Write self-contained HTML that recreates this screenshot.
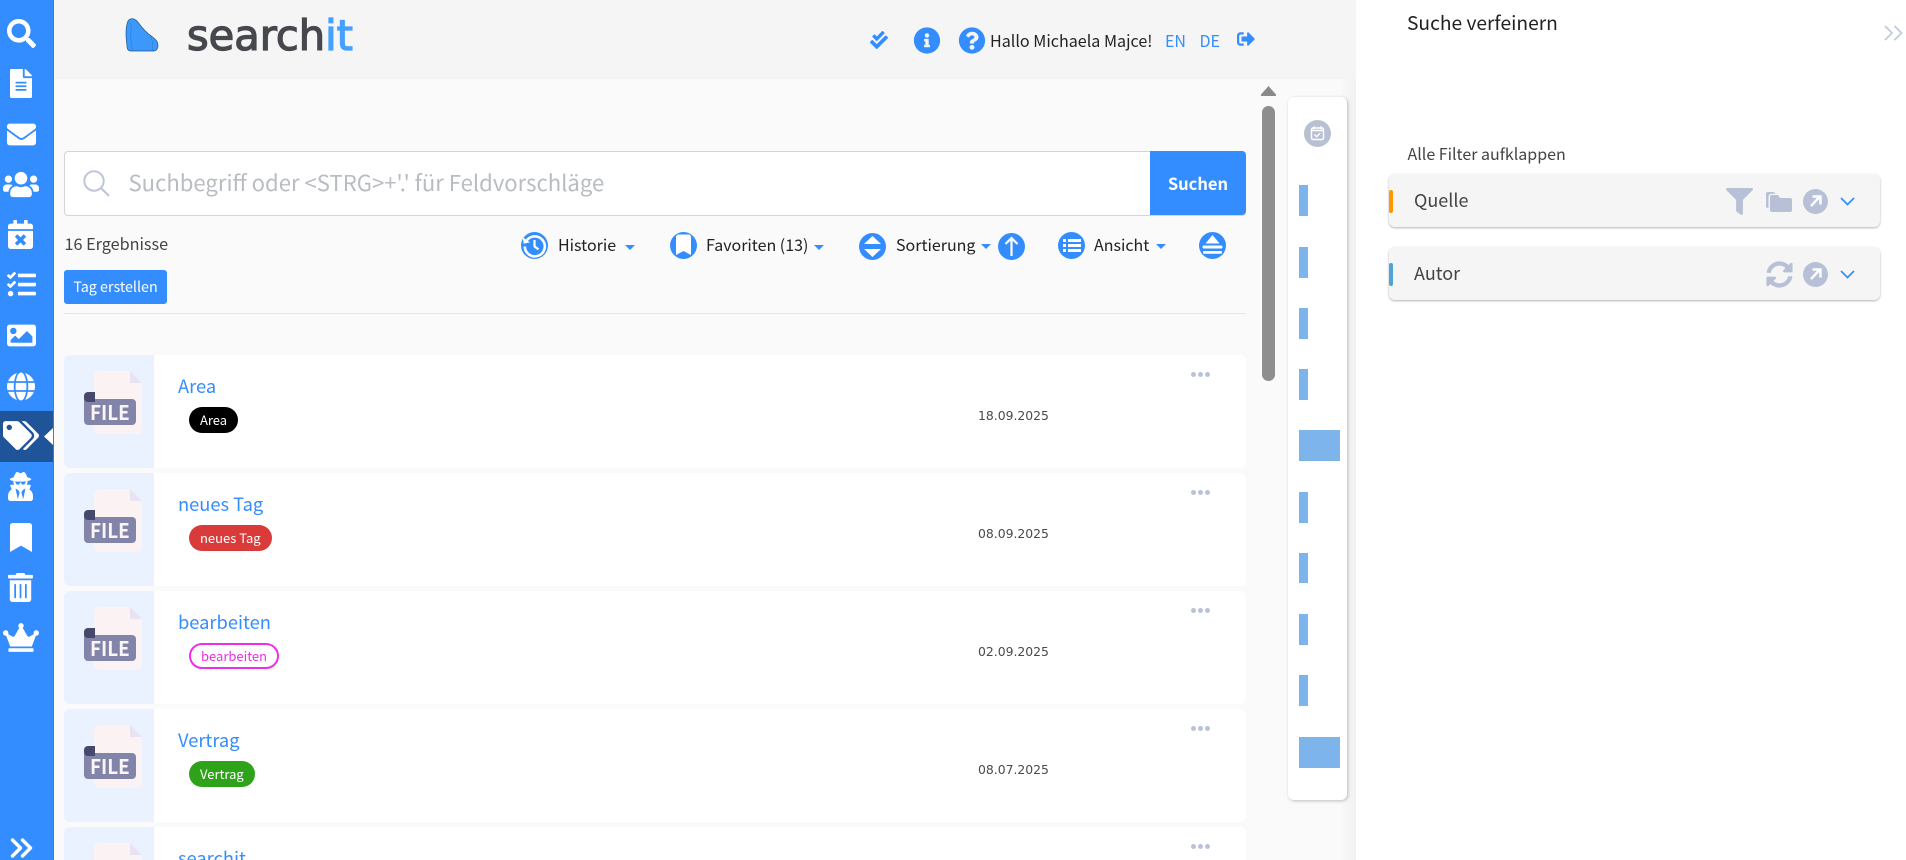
<!DOCTYPE html>
<html lang="de">
<head>
<meta charset="utf-8">
<title>searchit</title>
<style>
*{box-sizing:border-box}
html,body{margin:0;padding:0;width:1906px;height:860px;overflow:hidden;background:#fff;font-family:"Noto Sans CJK JP","Liberation Sans",sans-serif}
#root{position:relative;width:1906px;height:860px;overflow:hidden;background:#fff}
.a{position:absolute}
.t{position:absolute;white-space:nowrap;line-height:1}
svg{position:absolute;display:block;overflow:visible}
.w{fill:#fff}.b{fill:#348dff}.g{fill:#b7c0d6}
#side{left:0;top:0;width:54px;height:860px;background:#348dff;border-right:1px solid #2f7fe6}
#head{left:54px;top:0;width:1302px;height:79px;background:#f5f5f5}
#main{left:54px;top:79px;width:1302px;height:781px;background:#fafafa}
#mainr{left:1340px;top:79px;width:16px;height:781px;background:linear-gradient(90deg,#fafafa,#f1f1f1)}
.card{position:absolute;left:64px;width:1182px;height:113px;background:#fff;border-radius:6px;overflow:hidden}
.thumb{position:absolute;left:0;top:0;width:90px;height:100%;background:#ebf2ff}
.title{position:absolute;left:114px;top:19px;font-size:18.3px;line-height:24px;color:#348dff;white-space:nowrap}
.badge{position:absolute;left:125px;top:52px;height:26px;border-radius:13px;font-size:13px;line-height:25px;padding:0 11px;color:#fff;white-space:nowrap}
.date{position:absolute;left:914px;top:53px;font:12.4px/16px "DejaVu Sans",sans-serif;color:#4a4a4a;white-space:nowrap}
.dots{position:absolute;left:1127px;top:16.5px;width:20px;height:5px}
.dots i{position:absolute;top:0;width:5px;height:5px;border-radius:50%;background:#bac2da}
.fi{position:absolute;left:20px;top:16px;width:58px;height:63px}
.fi .pg{position:absolute;left:10px;top:0;width:48px;height:63px;background:#fbf2f3;border-radius:5px;clip-path:polygon(0 0,36px 0,100% 12px,100% 100%,0 100%)}
.fi .fd{position:absolute;left:46px;top:0;width:12px;height:12px;background:#e8e2f3;clip-path:polygon(0 0,100% 100%,0 100%)}
.fi .roll{position:absolute;left:0;top:21px;width:11px;height:10px;background:#46496b;border-radius:4px 0 0 4px;z-index:1}
.fi .ban{position:absolute;left:0;top:28px;width:52px;height:26px;background:#8285a9;border-radius:0 4px 4px 4px;color:#fcf5f5;font-size:20.5px;font-weight:700;line-height:25px;padding-left:6px}
.fi .ban span{display:inline-block;transform:scaleX(.92);transform-origin:0 50%}
.bar{position:absolute;left:1299px;width:9px;background:#7eb4ec}
.bar.l{width:41px}
.panel{position:absolute;left:1389px;width:491px;height:53px;background:#f5f5f5;border-radius:6px;box-shadow:0 1px 2px rgba(0,0,0,.3)}
.tick{position:absolute;left:0;top:16px;width:4px;height:23px;border-radius:2px}
.ptxt{position:absolute;left:25px;top:12px;font-size:18px;line-height:28px;color:#444}
.caret{position:absolute;width:0;height:0;border-left:5px solid transparent;border-right:5px solid transparent;border-top:5.5px solid #348dff}
.tb{font-size:16px;color:#222}
</style>
</head>
<body>
<div id="root">
<div class="a" id="head"></div>
<div class="a" id="main"></div>
<div class="a" id="mainr"></div>

<!-- Sidebar -->
<div class="a" id="side"></div>
<div class="a" style="left:0;top:411px;width:53px;height:51px;background:#1f5499"></div>

<svg style="left:7px;top:19px" width="29" height="29" viewBox="0 0 512 512"><path class="w" d="M505 442.7L405.3 343c-4.5-4.5-10.6-7-17-7H372c27.6-35.3 44-79.7 44-128C416 93.1 322.9 0 208 0S0 93.1 0 208s93.1 208 208 208c48.3 0 92.7-16.4 128-44v16.3c0 6.4 2.5 12.5 7 17l99.7 99.7c9.4 9.4 24.6 9.4 33.9 0l28.3-28.3c9.4-9.4 9.4-24.6.1-34zM208 336c-70.7 0-128-57.2-128-128 0-70.7 57.2-128 128-128 70.7 0 128 57.2 128 128 0 70.7-57.2 128-128 128z"/></svg>
<svg style="left:10px;top:69px" width="22" height="29" viewBox="0 0 384 512" preserveAspectRatio="none"><path class="w" d="M224 136V0H24C10.7 0 0 10.7 0 24v464c0 13.3 10.7 24 24 24h336c13.3 0 24-10.7 24-24V160H248c-13.2 0-24-10.8-24-24zm64 236c0 6.6-5.4 12-12 12H108c-6.6 0-12-5.4-12-12v-8c0-6.6 5.4-12 12-12h168c6.6 0 12 5.4 12 12v8zm0-64c0 6.6-5.4 12-12 12H108c-6.6 0-12-5.4-12-12v-8c0-6.6 5.4-12 12-12h168c6.6 0 12 5.4 12 12v8zm0-72v8c0 6.6-5.4 12-12 12H108c-6.6 0-12-5.4-12-12v-8c0-6.6 5.4-12 12-12h168c6.6 0 12 5.4 12 12zm96-114.1v6.1H256V0h6.1c6.4 0 12.5 2.5 17 7l97.9 98c4.5 4.5 7 10.6 7 16.9z"/></svg>
<svg style="left:7px;top:120px" width="29" height="29" viewBox="0 0 512 512"><path class="w" d="M502.3 190.8c3.9-3.1 9.7-.2 9.7 4.7V400c0 26.5-21.5 48-48 48H48c-26.5 0-48-21.5-48-48V195.6c0-5 5.7-7.8 9.7-4.7 22.4 17.4 52.1 39.5 154.1 113.6 21.1 15.4 56.7 47.8 92.2 47.6 35.7.3 72-32.8 92.3-47.6 102-74.1 131.6-96.3 154-113.7zM256 320c23.2.4 56.6-29.2 73.4-41.4 132.7-96.3 142.8-104.7 173.4-128.7 5.8-4.5 9.2-11.5 9.2-18.9v-19c0-26.5-21.5-48-48-48H48C21.5 64 0 85.5 0 112v19c0 7.4 3.4 14.3 9.2 18.9 30.6 23.9 40.7 32.4 173.4 128.7 16.8 12.2 50.2 41.8 73.4 41.4z"/></svg>
<svg style="left:3px;top:170px" width="36" height="29" viewBox="0 0 640 512"><path class="w" d="M96 224c35.3 0 64-28.7 64-64s-28.7-64-64-64-64 28.7-64 64 28.7 64 64 64zm448 0c35.3 0 64-28.7 64-64s-28.7-64-64-64-64 28.7-64 64 28.7 64 64 64zm32 32h-64c-17.6 0-33.5 7.1-45.1 18.6 40.3 22.1 68.9 62 75.1 109.4h66c17.7 0 32-14.3 32-32v-32c0-35.3-28.7-64-64-64zm-256 0c61.9 0 112-50.1 112-112S381.9 32 320 32 208 82.1 208 144s50.1 112 112 112zm76.8 32h-8.3c-20.8 10-43.9 16-68.5 16s-47.6-6-68.5-16h-8.3C179.6 288 128 339.6 128 403.2V432c0 26.5 21.5 48 48 48h288c26.5 0 48-21.5 48-48v-28.8c0-63.6-51.6-115.2-115.2-115.2zm-223.7-13.4C161.5 263.1 145.6 256 128 256H64c-35.3 0-64 28.7-64 64v32c0 17.7 14.3 32 32 32h65.9c6.3-47.4 34.9-87.3 75.2-109.4z"/></svg>
<svg style="left:8px;top:220px" width="25" height="29" viewBox="0 0 448 512" preserveAspectRatio="none"><path class="w" d="M436 160H12c-6.6 0-12-5.4-12-12v-36c0-26.5 21.5-48 48-48h48V12c0-6.6 5.4-12 12-12h40c6.6 0 12 5.4 12 12v52h128V12c0-6.6 5.4-12 12-12h40c6.6 0 12 5.4 12 12v52h48c26.5 0 48 21.5 48 48v36c0 6.6-5.4 12-12 12zM12 192h424c6.6 0 12 5.4 12 12v260c0 26.5-21.5 48-48 48H48c-26.5 0-48-21.5-48-48V204c0-6.6 5.4-12 12-12zm257.3 160l48.1-48.1c4.7-4.7 4.7-12.3 0-17l-28.3-28.3c-4.7-4.7-12.3-4.7-17 0L224 306.7l-48.1-48.1c-4.7-4.7-12.3-4.7-17 0l-28.3 28.3c-4.7 4.7-4.7 12.3 0 17l48.1 48.1-48.1 48.1c-4.7 4.7-4.7 12.3 0 17l28.3 28.3c4.7 4.7 12.3 4.7 17 0l48.1-48.1 48.1 48.1c4.7 4.7 12.3 4.7 17 0l28.3-28.3c4.7-4.7 4.7-12.3 0-17L269.3 352z"/></svg>
<svg style="left:7px;top:270px" width="29" height="29" viewBox="0 0 512 512"><path class="w" d="M139.61 35.5a12 12 0 0 0-17 0L58.93 98.81l-22.7-22.12a12 12 0 0 0-17 0L3.53 92.41a12 12 0 0 0 0 17l47.59 47.4a12.78 12.78 0 0 0 17.61 0l15.59-15.62L156.52 69a12.09 12.09 0 0 0 .09-17zm0 159.19a12 12 0 0 0-17 0l-63.68 63.72-22.7-22.1a12 12 0 0 0-17 0L3.53 252a12 12 0 0 0 0 17L51 316.5a12.77 12.77 0 0 0 17.6 0l15.7-15.69 72.2-72.22a12 12 0 0 0 .09-16.9zM64 368c-26.49 0-48.59 21.5-48.59 48S37.53 464 64 464a48 48 0 0 0 0-96zm432 16H208a16 16 0 0 0-16 16v32a16 16 0 0 0 16 16h288a16 16 0 0 0 16-16v-32a16 16 0 0 0-16-16zm0-320H208a16 16 0 0 0-16 16v32a16 16 0 0 0 16 16h288a16 16 0 0 0 16-16V80a16 16 0 0 0-16-16zm0 160H208a16 16 0 0 0-16 16v32a16 16 0 0 0 16 16h288a16 16 0 0 0 16-16v-32a16 16 0 0 0-16-16z"/></svg>
<svg style="left:7px;top:321px" width="29" height="29" viewBox="0 0 512 512"><path class="w" d="M464 448H48c-26.51 0-48-21.49-48-48V112c0-26.51 21.49-48 48-48h416c26.51 0 48 21.49 48 48v288c0 26.51-21.49 48-48 48zM112 120c-30.928 0-56 25.072-56 56s25.072 56 56 56 56-25.072 56-56-25.072-56-56-56zM64 384h384V272l-87.515-87.515c-4.686-4.686-12.284-4.686-16.971 0L208 320l-55.515-55.515c-4.686-4.686-12.284-4.686-16.971 0L64 336v48z"/></svg>
<svg style="left:7px;top:372px" width="28" height="29" viewBox="0 0 496 512"><path class="w" d="M336.5 160C322 70.7 287.8 8 248 8s-74 62.7-88.5 152h177zM152 256c0 22.2 1.2 43.5 3.3 64h185.3c2.1-20.5 3.3-41.8 3.3-64s-1.2-43.5-3.3-64H155.3c-2.1 20.5-3.3 41.8-3.3 64zm324.7-96c-28.6-67.9-86.5-120.4-158-141.6 24.4 33.8 41.2 84.7 50 141.6h108zM177.2 18.4C105.8 39.6 47.8 92.1 19.3 160h108c8.7-56.9 25.5-107.8 49.9-141.6zM487.4 192H372.7c2.1 21 3.3 42.5 3.3 64s-1.2 43-3.3 64h114.6c5.5-20.5 8.6-41.8 8.6-64s-3.1-43.5-8.5-64zM120 256c0-21.5 1.2-43 3.3-64H8.6C3.2 212.5 0 233.8 0 256s3.2 43.5 8.6 64h114.6c-2-21-3.2-42.5-3.2-64zm39.5 96c14.5 89.3 48.7 152 88.5 152s74-62.7 88.5-152h-177zm159.3 141.6c71.4-21.2 129.4-73.7 158-141.6h-108c-8.8 56.9-25.6 107.8-50 141.6zM19.3 352c28.6 67.9 86.5 120.4 158 141.6-24.4-33.8-41.2-84.7-50-141.6h-108z"/></svg>
<svg style="left:3px;top:421px" width="36" height="29" viewBox="0 0 640 512"><path class="w" d="M497.941 225.941L286.059 14.059A48 48 0 0 0 252.118 0H48C21.49 0 0 21.49 0 48v204.118a48 48 0 0 0 14.059 33.941l211.882 211.882c18.744 18.745 49.136 18.746 67.882 0l204.118-204.118c18.745-18.745 18.745-49.137 0-67.882zM112 160c-26.51 0-48-21.49-48-48s21.49-48 48-48 48 21.49 48 48-21.49 48-48 48zm513.941 133.823L421.823 497.941c-18.745 18.745-49.137 18.745-67.882 0l-.36-.36L527.64 323.522c16.999-16.999 26.36-39.6 26.36-63.64s-9.362-46.641-26.36-63.64L331.397 0h48.721a48 48 0 0 1 33.941 14.059l211.882 211.882c18.745 18.745 18.745 49.137 0 67.882z"/></svg>
<svg style="left:44px;top:428px" width="9" height="17" viewBox="0 0 9 17"><path class="w" d="M9 0L0 8.5 9 17z"/></svg>
<svg style="left:8px;top:472px" width="25" height="29" viewBox="0 0 448 512" preserveAspectRatio="none"><path class="w" d="M383.9 308.3l23.9-62.6c4-10.5-3.7-21.7-15-21.7h-58.5c11-18.9 17.8-40.6 17.8-64v-.3c39.2-7.8 64-19.1 64-31.7 0-13.3-27.3-25.1-70.1-33-9.2-32.8-27-65.8-40.6-82.8-9.5-11.9-25.9-15.6-39.5-8.8l-27.6 13.8c-9 4.5-19.6 4.5-28.6 0L182.1 3.4c-13.6-6.8-30-3.1-39.5 8.8-13.5 17-31.4 50-40.6 82.8-42.7 7.9-70 19.7-70 33 0 12.6 24.8 23.9 64 31.7v.3c0 23.4 6.8 45.1 17.8 64H56.3c-11.5 0-19.2 11.7-14.7 22.3l25.8 60.2C27.3 329.8 0 372.7 0 422.4v44.8C0 491.9 20.1 512 44.8 512h358.4c24.7 0 44.8-20.1 44.8-44.8v-44.8c0-48.4-25.8-90.4-64.1-114.1zM176 480l-41.6-192 49.6 32 24 40-32 120zm96 0l-32-120 24-40 49.6-32L272 480zm41.7-298.5c-3.9 11.9-7 24.6-16.5 33.4-10.1 9.3-48 22.4-64-25-2.8-8.4-15.4-8.4-18.3 0-17 50.2-56 32.4-64 25-9.5-8.8-12.7-21.5-16.5-33.4-.8-2.5-6.3-5.7-6.3-5.8v-10.8c28.3 3.6 61 5.8 96 5.8s67.7-2.1 96-5.8v10.8c-.1.1-5.6 3.2-6.4 5.8z"/></svg>
<svg style="left:10px;top:523px" width="22" height="29" viewBox="0 0 384 512" preserveAspectRatio="none"><path class="w" d="M0 512V48C0 21.49 21.49 0 48 0h288c26.51 0 48 21.49 48 48v464L192 400 0 512z"/></svg>
<svg style="left:8px;top:573px" width="25" height="29" viewBox="0 0 448 512" preserveAspectRatio="none"><path class="w" d="M32 464a48 48 0 0 0 48 48h288a48 48 0 0 0 48-48V128H32zm272-256a16 16 0 0 1 32 0v224a16 16 0 0 1-32 0zm-96 0a16 16 0 0 1 32 0v224a16 16 0 0 1-32 0zm-96 0a16 16 0 0 1 32 0v224a16 16 0 0 1-32 0zM432 32H312l-9.4-18.7A24 24 0 0 0 281.1 0H166.8a23.72 23.72 0 0 0-21.4 13.3L136 32H16A16 16 0 0 0 0 48v32a16 16 0 0 0 16 16h416a16 16 0 0 0 16-16V48a16 16 0 0 0-16-16z"/></svg>
<svg style="left:3px;top:623px" width="36" height="29" viewBox="0 0 640 512"><path class="w" d="M528 448H112c-8.8 0-16 7.2-16 16v32c0 8.8 7.2 16 16 16h416c8.8 0 16-7.2 16-16v-32c0-8.8-7.2-16-16-16zm64-320c-26.5 0-48 21.5-48 48 0 7.1 1.6 13.7 4.4 19.8L476 239.2c-15.4 9.2-35.3 4-44.2-11.6L350.3 85C361 76.2 368 63 368 48c0-26.5-21.5-48-48-48s-48 21.5-48 48c0 15 7 28.2 17.7 37l-81.5 142.6c-8.9 15.6-28.9 20.8-44.2 11.6l-72.3-43.4c2.7-6 4.4-12.7 4.4-19.8 0-26.5-21.5-48-48-48S0 149.5 0 176s21.5 48 48 48c2.6 0 5.2-.4 7.7-.8L128 416h384l72.3-192.8c2.5.4 5.1.8 7.7.8 26.5 0 48-21.5 48-48s-21.5-48-48-48z"/></svg>
<svg style="left:10px;top:837px" width="24" height="22" viewBox="0 0 24 22"><path d="M2.5 3l8 8-8 8M12.5 3l8 8-8 8" fill="none" stroke="#fff" stroke-width="3.4" stroke-linejoin="round" stroke-linecap="round"/></svg>

<!-- Logo -->
<svg style="left:124.5px;top:18px" width="34" height="34" viewBox="0 0 34 34"><path d="M3 3C5 0 9 0 12 3 16 8 19 13 25 17 29 20 33 23 33 27 33 31 31 33 28 33L6 33C3 33 2 31 2 28 1 20 0 10 3 3Z" fill="#3d98fb" stroke="#22568f" stroke-width=".7"/><path d="M4 4C9 9 3 17 8 33M25 17C28 23 28 28 27 33" fill="none" stroke="#22568f" stroke-width=".4" opacity=".7"/></svg>
<svg style="left:187px;top:10px" width="170" height="45" viewBox="0 0 170 45"><text x="0" y="40" font-family="DejaVu Sans" font-size="42" stroke-width="1.3" textLength="166" lengthAdjust="spacingAndGlyphs"><tspan fill="#46484d" stroke="#46484d">search</tspan><tspan fill="#45a0ff" stroke="#45a0ff">it</tspan></text></svg>

<!-- Header right -->
<svg style="left:870px;top:31px" width="18" height="18" viewBox="0 0 512 512"><path class="b" d="M505 174.8l-39.6-39.6c-9.4-9.4-24.6-9.4-33.9 0L192 374.7 80.6 263.2c-9.4-9.4-24.6-9.4-33.9 0L7 302.9c-9.4 9.4-9.4 24.6 0 34L175 505c9.4 9.4 24.6 9.4 33.9 0l296-296.2c9.4-9.5 9.4-24.7.1-34zm-324.3 106c6.2 6.3 16.4 6.3 22.6 0l208-208.2c6.2-6.3 6.2-16.4 0-22.6L366.1 4.7c-6.2-6.3-16.4-6.3-22.6 0L192 156.2l-55.4-55.5c-6.2-6.3-16.4-6.3-22.6 0L68.7 146c-6.2 6.3-6.2 16.4 0 22.6l112 112.2z"/></svg>
<svg style="left:913px;top:27px" width="28" height="27" viewBox="0 0 512 512"><path class="b" d="M256 8C119 8 8 119.1 8 256c0 137 111 248 248 248s248-111 248-248C504 119.1 393 8 256 8zm0 110c23.2 0 42 18.8 42 42s-18.8 42-42 42-42-18.8-42-42 18.8-42 42-42zm56 254c0 6.6-5.4 12-12 12h-88c-6.6 0-12-5.4-12-12v-24c0-6.6 5.4-12 12-12h12v-64h-12c-6.6 0-12-5.4-12-12v-24c0-6.6 5.4-12 12-12h64c6.6 0 12 5.4 12 12v100h12c6.6 0 12 5.4 12 12v24z"/></svg>
<svg style="left:958px;top:27px" width="28" height="27" viewBox="0 0 512 512"><path class="b" d="M504 256c0 136.997-111.043 248-248 248S8 392.997 8 256C8 119.083 119.043 8 256 8s248 111.083 248 248zM262.655 90c-54.497 0-89.255 22.957-116.549 63.758-3.536 5.286-2.353 12.415 2.715 16.258l34.699 26.31c5.205 3.947 12.621 3.008 16.665-2.122 17.864-22.658 30.113-35.797 57.303-35.797 20.429 0 45.698 13.148 45.698 32.958 0 14.976-12.363 22.667-32.534 33.976C247.128 238.528 216 254.941 216 296v4c0 6.627 5.373 12 12 12h56c6.627 0 12-5.373 12-12v-1.333c0-28.462 83.186-29.647 83.186-106.667 0-58.002-60.165-102-116.531-102zM256 338c-25.365 0-46 20.635-46 46 0 25.364 20.635 46 46 46s46-20.636 46-46c0-25.365-20.635-46-46-46z"/></svg>
<div class="t" style="left:990px;top:32px;font-size:16.1px;color:#222">Hallo Michaela Majce!</div>
<div class="t" style="left:1165px;top:32px;font-size:16px;color:#348dff">EN</div>
<div class="t" style="left:1199.5px;top:32px;font-size:16px;color:#348dff">DE</div>
<svg style="left:1237px;top:30px" width="18" height="18" viewBox="0 0 512 512"><path class="b" d="M497 273L329 441c-15 15-41 4.5-41-17v-96H152c-13.3 0-24-10.7-24-24v-96c0-13.3 10.7-24 24-24h136V88c0-21.4 25.9-32 41-17l168 168c9.3 9.4 9.3 24.6 0 34zM192 436v-40c0-6.6-5.4-12-12-12H96c-17.7 0-32-14.3-32-32V160c0-17.7 14.3-32 32-32h84c6.6 0 12-5.4 12-12V76c0-6.6-5.4-12-12-12H96c-53 0-96 43-96 96v192c0 53 43 96 96 96h84c6.6 0 12-5.4 12-12z"/></svg>

<!-- Search box -->
<div class="a" style="left:64px;top:151px;width:1182px;height:65px;background:#fff;border:1px solid #d3d3d8;border-radius:4px"></div>
<svg style="left:83px;top:170px" width="27" height="27" viewBox="0 0 27 27"><circle cx="11" cy="11" r="9.7" fill="none" stroke="#bfc6d8" stroke-width="2"/><path d="M18 18l8 8" stroke="#bfc6d8" stroke-width="2.2" fill="none"/></svg>
<div class="t" style="left:128.5px;top:168.5px;font-size:22.1px;color:#b9bcc2;line-height:26px">Suchbegriff oder &lt;STRG&gt;+'.' für Feldvorschläge</div>
<div class="a" style="left:1150px;top:151px;width:96px;height:64px;background:#348dff;border-radius:0 4px 4px 0"></div>
<div class="t" style="left:1150px;top:173px;width:96px;text-align:center;font-size:16.5px;font-weight:700;color:#fff;line-height:20px">Suchen</div>

<!-- Toolbar -->
<div class="t" style="left:64.5px;top:234px;font-size:16.2px;color:#444;line-height:18px">16 Ergebnisse</div>
<svg style="left:521px;top:232px" width="27" height="27" viewBox="0 0 27 27"><circle cx="13.5" cy="13.5" r="13.5" fill="#348dff"/><path d="M5.5 8.8A10 10 0 1 1 3.8 14.5" fill="none" stroke="#fff" stroke-width="2.6"/><path d="M1.8 5.2l.9 6.6 6.3-1.4z" fill="#fff"/><path d="M13.5 8v6.4l4 3" fill="none" stroke="#fff" stroke-width="2.2"/></svg>
<div class="t tb" style="left:558px;top:235px;line-height:18px">Historie</div>
<div class="caret" style="left:624.5px;top:245px"></div>
<svg style="left:670px;top:232px" width="27" height="27" viewBox="0 0 27 27"><circle cx="13.5" cy="13.5" r="13.5" fill="#348dff"/><path d="M6 5a2.500 2.500 0 0 1 2.500-2.500h10a2.500 2.500 0 0 1 2.500 2.500V23l-7.500-4-7.500 4z" fill="#fff"/></svg>
<div class="t tb" style="left:706px;top:235px;line-height:18px">Favoriten (13)</div>
<div class="caret" style="left:813.5px;top:245px"></div>
<svg style="left:859px;top:233px" width="27" height="27" viewBox="0 0 27 27"><circle cx="13.5" cy="13.5" r="13.5" fill="#348dff"/><path d="M5 11L13.5 3 22 11zM5 16L13.5 24 22 16z" fill="#fff"/></svg>
<div class="t tb" style="left:896px;top:235px;line-height:18px">Sortierung</div>
<div class="caret" style="left:980.5px;top:244px"></div>
<svg style="left:998px;top:233px" width="27" height="27" viewBox="0 0 27 27"><circle cx="13.5" cy="13.5" r="13.5" fill="#348dff"/><path d="M13.5 23V5M7.5 11l6-6 6 6" fill="none" stroke="#fff" stroke-width="2.2"/></svg>
<svg style="left:1058px;top:232px" width="27" height="27" viewBox="0 0 27 27"><circle cx="13.5" cy="13.5" r="13.5" fill="#348dff"/><path d="M5 7h3v3H5zM5 12h3v3H5zM5 17h3v3H5zM10 7h13v3H10zM10 12h13v3H10zM10 17h13v3H10z" fill="#fff"/></svg>
<div class="t tb" style="left:1094px;top:235px;line-height:18px">Ansicht</div>
<div class="caret" style="left:1155.5px;top:244px"></div>
<svg style="left:1199px;top:232px" width="27" height="27" viewBox="0 0 27 27"><circle cx="13.5" cy="13.5" r="13.5" fill="#348dff"/><path d="M6.5 11.5L13.5 3 20.5 11.5z" fill="#fff"/><rect x="3.5" y="13.5" width="20" height="3" rx="1.5" fill="#fff"/><rect x="4" y="19" width="19" height="2.8" rx="1.4" fill="#fff"/></svg>

<div class="a" style="left:64px;top:270px;width:103px;height:34px;background:#348dff;border-radius:3px"></div>
<div class="t" style="left:64px;top:278px;width:103px;text-align:center;font-size:14.3px;color:#fff;line-height:18px">Tag erstellen</div>
<div class="a" style="left:64px;top:313px;width:1182px;height:1px;background:#e6e6e6"></div>

<!-- Cards -->
<div class="card" style="top:355px">
 <div class="thumb"><div class="fi"><div class="pg"></div><div class="fd"></div><div class="ban"><span>FILE</span></div><div class="roll"></div></div></div>
 <div class="title">Area</div>
 <div class="badge" style="background:#000">Area</div>
 <div class="date">18.09.2025</div>
 <div class="dots"><i style="left:0"></i><i style="left:7px"></i><i style="left:14px"></i></div>
</div>
<div class="card" style="top:473px">
 <div class="thumb"><div class="fi"><div class="pg"></div><div class="fd"></div><div class="ban"><span>FILE</span></div><div class="roll"></div></div></div>
 <div class="title">neues Tag</div>
 <div class="badge" style="background:#d93a3a">neues Tag</div>
 <div class="date">08.09.2025</div>
 <div class="dots"><i style="left:0"></i><i style="left:7px"></i><i style="left:14px"></i></div>
</div>
<div class="card" style="top:591px">
 <div class="thumb"><div class="fi"><div class="pg"></div><div class="fd"></div><div class="ban"><span>FILE</span></div><div class="roll"></div></div></div>
 <div class="title">bearbeiten</div>
 <div class="badge" style="background:#fff;border:2px solid #ee2ee8;color:#ee2ee8;line-height:22px;padding:0 10px">bearbeiten</div>
 <div class="date">02.09.2025</div>
 <div class="dots"><i style="left:0"></i><i style="left:7px"></i><i style="left:14px"></i></div>
</div>
<div class="card" style="top:709px">
 <div class="thumb"><div class="fi"><div class="pg"></div><div class="fd"></div><div class="ban"><span>FILE</span></div><div class="roll"></div></div></div>
 <div class="title">Vertrag</div>
 <div class="badge" style="background:#2ea31a">Vertrag</div>
 <div class="date">08.07.2025</div>
 <div class="dots"><i style="left:0"></i><i style="left:7px"></i><i style="left:14px"></i></div>
</div>
<div class="card" style="top:827px;height:33px;border-radius:6px 6px 0 0">
 <div class="thumb"><div class="fi" style="height:17px"><div class="pg" style="height:17px;border-radius:5px 0 0 0"></div><div class="fd"></div></div></div>
 <div class="title" style="height:14px;overflow:hidden">searchit</div>
 <div class="dots"><i style="left:0"></i><i style="left:7px"></i><i style="left:14px"></i></div>
</div>

<!-- Scrollbar -->
<svg style="left:1261px;top:86px" width="15" height="10" viewBox="0 0 15 10"><path d="M7.5 0L15 8.5a1 1 0 0 1-1 1.5H1a1 1 0 0 1-1-1.5z" fill="#8a8a8a"/></svg>
<div class="a" style="left:1262px;top:106px;width:13px;height:275px;background:#8e8e8e;border-radius:6.5px"></div>

<!-- Timeline -->
<div class="a" style="left:1288px;top:97px;width:59px;height:703px;background:#fff;border-radius:6px;box-shadow:1px 1px 3px rgba(0,0,0,.25)"></div>
<svg style="left:1304px;top:120px" width="27" height="27" viewBox="0 0 27 27"><circle cx="13.5" cy="13.5" r="13.5" fill="#b8c0d4"/><rect x="7.5" y="8" width="12" height="11.5" rx="1.5" fill="none" stroke="#fff" stroke-width="1.4"/><path d="M10 6.2v3M17 6.2v3M7.5 10.5h12" stroke="#fff" stroke-width="1.4" fill="none"/><path d="M10.5 14.5l2.2 2.2 3.6-3.6" stroke="#fff" stroke-width="1.3" fill="none"/></svg>
<div class="bar" style="top:185px;height:31px"></div>
<div class="bar" style="top:247px;height:31px"></div>
<div class="bar" style="top:308px;height:31px"></div>
<div class="bar" style="top:369px;height:31px"></div>
<div class="bar l" style="top:430px;height:31px"></div>
<div class="bar" style="top:492px;height:31px"></div>
<div class="bar" style="top:553px;height:30px"></div>
<div class="bar" style="top:614px;height:31px"></div>
<div class="bar" style="top:675px;height:31px"></div>
<div class="bar l" style="top:737px;height:31px"></div>

<!-- Right panel -->
<div class="t" style="left:1407px;top:10px;font-size:19.2px;color:#222;line-height:24px">Suche verfeinern</div>
<svg style="left:1884px;top:25px" width="20" height="16" viewBox="0 0 20 16"><path d="M1 1l7 7-7 7M10.5 1l7 7-7 7" fill="none" stroke="#c3cade" stroke-width="1.8"/></svg>
<div class="t" style="left:1407.5px;top:144px;font-size:16px;color:#444;line-height:18px">Alle Filter aufklappen</div>

<div class="panel" style="top:174px">
 <div class="tick" style="background:#ff9800"></div>
 <div class="ptxt">Quelle</div>
</div>
<svg style="left:1726px;top:188px" width="27" height="27" viewBox="0 0 512 512" preserveAspectRatio="none"><path class="g" d="M487.976 0H24.028C2.71 0-8.047 25.866 7.058 40.971L192 225.941V432c0 7.831 3.821 15.17 10.237 19.662l80 55.98C298.02 518.69 320 507.493 320 487.98V225.941l184.947-184.97C520.021 25.896 509.338 0 487.976 0z"/></svg>
<svg style="left:1766px;top:192px" width="26" height="20" viewBox="0 0 26 20"><path class="g" d="M4 5a2 2 0 0 1 2-2h6l2 3h10a2 2 0 0 1 2 2v10a2 2 0 0 1-2 2H6a2 2 0 0 1-2-2z"/><path class="g" d="M0 2a2 2 0 0 1 2-2h6l1.5 1.800H6a3 3 0 0 0-3.500 3v11.200H2a2 2 0 0 1-2-2z"/></svg>
<svg style="left:1803px;top:189px" width="25" height="25" viewBox="0 0 25 25"><circle cx="12.5" cy="12.5" r="12.5" fill="#b7c0d6"/><path d="M8 17l8-8.500M9.500 7.500h8v8" fill="none" stroke="#fff" stroke-width="2.4"/></svg>
<svg style="left:1840px;top:197px" width="15" height="9" viewBox="0 0 15 9"><path d="M1 1l6.500 6.500L14 1" fill="none" stroke="#348dff" stroke-width="1.7"/></svg>

<div class="panel" style="top:247px">
 <div class="tick" style="background:#4fa3d8"></div>
 <div class="ptxt">Autor</div>
</div>
<svg style="left:1766px;top:261px" width="27" height="27" viewBox="0 0 512 512"><path class="g" d="M370.72 133.28C339.458 104.008 298.888 87.962 255.848 88c-77.458.068-144.328 53.178-162.791 126.85-1.344 5.363-6.122 9.15-11.651 9.15H24.103c-7.498 0-13.194-6.807-11.807-14.176C33.933 94.924 134.813 8 256 8c66.448 0 126.791 26.136 171.315 68.685L463.03 40.97C478.149 25.851 504 36.559 504 57.941V192c0 13.255-10.745 24-24 24H345.941c-21.382 0-32.09-25.851-16.971-40.971l41.75-41.749zM32 296h134.059c21.382 0 32.09 25.851 16.971 40.971l-41.75 41.75c31.262 29.273 71.835 45.319 114.876 45.28 77.418-.07 144.315-53.144 162.787-126.849 1.344-5.363 6.122-9.15 11.651-9.15h57.304c7.498 0 13.194 6.807 11.807 14.176C478.067 417.076 377.187 504 256 504c-66.448 0-126.791-26.136-171.315-68.685L48.97 471.03C33.851 486.149 8 475.441 8 454.059V320c0-13.255 10.745-24 24-24z"/></svg>
<svg style="left:1803px;top:262px" width="25" height="25" viewBox="0 0 25 25"><circle cx="12.5" cy="12.5" r="12.5" fill="#b7c0d6"/><path d="M8 17l8-8.500M9.500 7.500h8v8" fill="none" stroke="#fff" stroke-width="2.4"/></svg>
<svg style="left:1840px;top:270px" width="15" height="9" viewBox="0 0 15 9"><path d="M1 1l6.500 6.500L14 1" fill="none" stroke="#348dff" stroke-width="1.7"/></svg>
</div>
</body>
</html>
